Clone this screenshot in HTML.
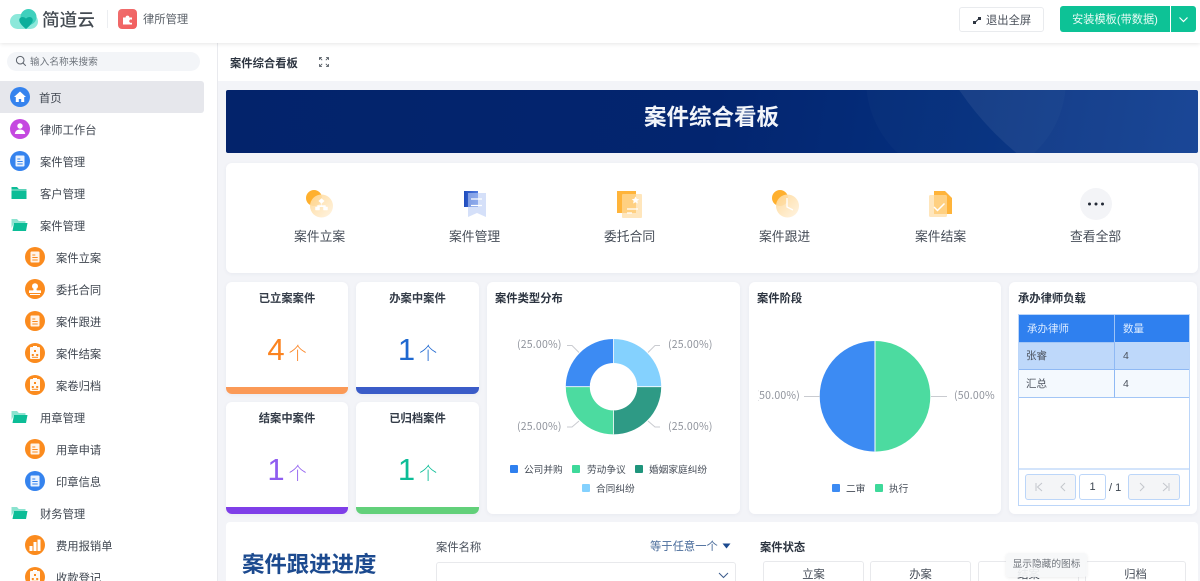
<!DOCTYPE html>
<html lang="zh"><head><meta charset="utf-8"><title>案件综合看板</title>
<style>
*{box-sizing:border-box;margin:0;padding:0}
html,body{width:1200px;height:581px;overflow:hidden;background:#f3f4f8}
body{position:relative;font-family:"Liberation Sans","Noto Sans CJK SC",sans-serif;color:#3c4550;filter:blur(.3px)}
.a{position:absolute;white-space:nowrap}
.card{position:absolute;background:#fff;border-radius:6px;box-shadow:0 1px 4px rgba(40,50,90,.05)}
.mi{position:absolute;font-size:11.3px;line-height:16px;color:#3f4650;white-space:nowrap;margin-top:2px}
.ic{position:absolute;width:20px;height:20px}
.ttl{position:absolute;font-size:11.3px;font-weight:700;color:#2c3440;line-height:16px;white-space:nowrap}
.sc{position:absolute;top:229px;font-size:12.8px;line-height:16px;color:#454c57;white-space:nowrap}
.stat{position:absolute;width:122px;height:112px;background:#fff;border-radius:6px;overflow:hidden;box-shadow:0 1px 4px rgba(40,50,90,.05)}
.stat b{position:absolute;left:0;right:0;top:9px;text-align:center;font-size:11.3px;line-height:16px;color:#343c48}
.stat i{position:absolute;left:0;right:0;bottom:0;height:7px}
.stat span{position:absolute;left:0;right:0;top:48px;text-align:center;font-style:normal;font-size:31px;line-height:40px;font-family:"Liberation Sans","Noto Sans CJK SC",sans-serif;font-weight:400}
.stat span em{font-style:normal;font-size:18px;margin-left:4px;font-family:"Noto Sans CJK SC",sans-serif;font-weight:300}
.lg{position:absolute;font-size:9.7px;line-height:12px;color:#454c57;white-space:nowrap;margin-top:1px}
.sq{position:absolute;width:8px;height:8px;border-radius:1px}
.lbl{position:absolute;font-family:"Noto Sans CJK SC","Liberation Sans",sans-serif;font-size:10.5px;line-height:14px;color:#8f939c;letter-spacing:.2px;white-space:nowrap;margin-top:1px}
.opt{position:absolute;top:561px;height:30px;background:#fff;border:1px solid #e8e9ec;border-radius:3px;text-align:center;font-size:11.3px;line-height:26px;color:#454c57}
.pg{position:absolute;top:474px;height:26px;background:#f4f5f7;border:1px solid #bcd6f9;text-align:center;color:#3c4550;font-size:11px;line-height:24px}
.pg svg{position:absolute;left:8px;top:7px}
</style></head><body>
<svg width="0" height="0" style="position:absolute"><defs>
<linearGradient id="gb" x1="0" y1="0" x2="1" y2="1"><stop offset="0" stop-color="#ffd793"/><stop offset="1" stop-color="#fff3e0"/></linearGradient>
<linearGradient id="gn" x1="0" y1="0" x2="1" y2="0"><stop offset="0" stop-color="#1f4cbd"/><stop offset="1" stop-color="#4f7be0"/></linearGradient>
<symbol id="doc" viewBox="0 0 20 20"><rect x="5.500" y="4.500" width="9" height="11" rx="1" fill="#fff" opacity=".9"/><path d="M7.300 8h3M7.300 10.500h5.400M7.300 13h5.400" stroke="currentColor" stroke-width="1"/></symbol>
<symbol id="stamp" viewBox="0 0 20 20"><circle cx="10" cy="7.300" r="3" fill="#fff"/><path d="M8.800 9h2.400l.6 2.400H16v2.600H4v-2.600h4.200z" fill="#fff"/><rect x="5" y="15" width="10" height="1" fill="#fff"/></symbol>
<symbol id="org" viewBox="0 0 20 20"><rect x="5" y="4" width="10" height="12" rx="1" fill="#fff" opacity=".95"/><rect x="8" y="3" width="4" height="2" fill="#fff"/><path d="M9 7h2v2H9zM6.800 11h2v2h-2zM11.200 11h2v2h-2z" fill="#fb8b1e"/><path d="M7 14.300h6" stroke="#fb8b1e"/></symbol>
<symbol id="folder" viewBox="0 0 20 20"><path d="M2.500 4h5.500l1.800 2H17.500v10h-15z" fill="#0cbd97"/><path d="M2.500 7h15" stroke="#d5f3ec" stroke-width=".8"/></symbol>
<symbol id="open" viewBox="0 0 20 20"><path d="M2.500 4h5.500l1.800 2H16.500v2H5L2.500 13z" fill="#8be3cf"/><path d="M5 8h13.500l-1.500 8H3.500z" fill="#0cbd97"/></symbol>
</defs></svg>

<!-- header -->
<div class="a" style="left:0;top:0;width:1200px;height:43px;background:#fff;box-shadow:0 1px 4px rgba(0,0,0,.1);z-index:3">
<svg class="a" style="left:10px;top:9px" width="28" height="20" viewBox="0 0 28 20"><rect x="0" y="5" width="28" height="15" rx="7.500" fill="#8ce8da"/><circle cx="18.500" cy="8" r="8" fill="#3fd0bd"/><path d="M16 20C10.500 15.500 8.500 12.500 9.500 9.800c1-2.300 4.300-2.500 6.500-.2 2.200-2.300 5.500-2.100 6.500.2 1 2.700-1 5.700-6.500 10.200z" fill="#0cae9b"/></svg>
<div class="a" style="left:42px;top:8px;font-size:17.600px;line-height:24px;font-weight:500;color:#444b52">简道云</div>
<div class="a" style="left:107px;top:10px;width:1px;height:18px;background:#eceef1"></div>
<div class="a" style="left:118px;top:9px;width:19px;height:20px;border-radius:4px;background:linear-gradient(135deg,#ef6f6f,#f25c5c)"></div>
<svg class="a" style="left:122px;top:14px" width="11" height="11" viewBox="0 0 11 11"><path d="M1 3.500h2.600a1.900 1.900 0 1 1 3.800 0H10v2.300a1.700 1.700 0 1 0 0 2.700V10.500H1z" fill="#fff"/></svg>
<div class="a" style="left:143px;top:12px;font-size:11.300px;line-height:16px;color:#5a6068">律所管理</div>
<div class="a" style="left:959px;top:7px;width:85px;height:25px;border:1px solid #e9ebee;border-radius:3px;background:#fff"></div>
<svg class="a" style="left:972px;top:16px" width="10" height="9" viewBox="0 0 10 9"><path d="M2 7.500L8 1.500" stroke="#2d3440" stroke-width="1"/><rect x="1" y="5" width="3" height="3" fill="#2d3440"/><rect x="6" y="1" width="3" height="3" fill="#2d3440"/></svg>
<div class="a" style="left:986px;top:13px;font-size:11.300px;line-height:16px;color:#4b515b">退出全屏</div>
<div class="a" style="left:1060px;top:6px;width:110px;height:26px;background:#0dc296;border-radius:3px 0 0 3px;color:#e9fbf5;font-size:11.200px;line-height:28px;text-align:center">安装模板(带数据)</div>
<div class="a" style="left:1171px;top:6px;width:25px;height:26px;background:#0dc296;border-radius:0 3px 3px 0"></div>
<svg class="a" style="left:1178px;top:16px" width="11" height="7" viewBox="0 0 11 7"><path d="M1.500 1.500l4 4 4-4" fill="none" stroke="#fff" stroke-width="1.200"/></svg>
</div>

<!-- sidebar -->
<div class="a" style="left:0;top:43px;width:218px;height:538px;background:#fff;border-right:1px solid #e9eaee"></div>
<div class="a" style="left:7px;top:52px;width:193px;height:19px;background:#f3f5f8;border-radius:10px"></div>
<svg class="a" style="left:15px;top:55px" width="12" height="12" viewBox="0 0 12 12"><circle cx="5.200" cy="5.200" r="3.800" fill="none" stroke="#5c626b" stroke-width="1"/><path d="M8 8l2.800 2.800" stroke="#5c626b" stroke-width="1"/></svg>
<div class="a" style="left:30px;top:56px;font-size:9.700px;line-height:14px;color:#6f757d">输入名称来搜索</div>
<div class="a" style="left:0;top:81px;width:204px;height:32px;background:#e6e7ec;border-radius:0 3px 3px 0"></div>

<svg class="ic" style="left:10px;top:87px" viewBox="0 0 20 20"><circle cx="10" cy="10" r="10" fill="#3583ee"/><path d="M10 4.500L16 10h-1.800v5h-3v-3H8.800v3h-3v-5H4z" fill="#fff"/></svg>
<div class="mi" style="left:39px;top:88.500px">首页</div>
<svg class="ic" style="left:10px;top:119px" viewBox="0 0 20 20"><circle cx="10" cy="10" r="10" fill="#c548e0"/><circle cx="10" cy="7" r="2.700" fill="#fff"/><path d="M4.800 15c.4-3 2.300-4.500 5.200-4.500s4.800 1.500 5.200 4.500z" fill="#fff"/></svg>
<div class="mi" style="left:40px;top:121px">律师工作台</div>
<svg class="ic" style="left:10px;top:151px;color:#3583ee" viewBox="0 0 20 20"><circle cx="10" cy="10" r="10" fill="#3583ee"/><use href="#doc"/></svg>
<div class="mi" style="left:40px;top:153px">案件管理</div>
<svg class="ic" style="left:9px;top:183px" viewBox="0 0 20 20"><use href="#folder"/></svg>
<div class="mi" style="left:40px;top:185px">客户管理</div>
<svg class="ic" style="left:9px;top:215px" viewBox="0 0 20 20"><use href="#open"/></svg>
<div class="mi" style="left:40px;top:217px">案件管理</div>

<svg class="ic" style="left:25px;top:247px;color:#fb8b1e" viewBox="0 0 20 20"><circle cx="10" cy="10" r="10" fill="#fb8b1e"/><use href="#doc"/></svg>
<div class="mi" style="left:56px;top:249px">案件立案</div>
<svg class="ic" style="left:25px;top:279px" viewBox="0 0 20 20"><circle cx="10" cy="10" r="10" fill="#fb8b1e"/><use href="#stamp"/></svg>
<div class="mi" style="left:56px;top:281px">委托合同</div>
<svg class="ic" style="left:25px;top:311px;color:#fb8b1e" viewBox="0 0 20 20"><circle cx="10" cy="10" r="10" fill="#fb8b1e"/><use href="#doc"/></svg>
<div class="mi" style="left:56px;top:313px">案件跟进</div>
<svg class="ic" style="left:25px;top:343px" viewBox="0 0 20 20"><circle cx="10" cy="10" r="10" fill="#fb8b1e"/><use href="#org"/></svg>
<div class="mi" style="left:56px;top:345px">案件结案</div>
<svg class="ic" style="left:25px;top:375px" viewBox="0 0 20 20"><circle cx="10" cy="10" r="10" fill="#fb8b1e"/><use href="#org"/></svg>
<div class="mi" style="left:56px;top:377px">案卷归档</div>
<svg class="ic" style="left:9px;top:407px" viewBox="0 0 20 20"><use href="#open"/></svg>
<div class="mi" style="left:40px;top:409px">用章管理</div>
<svg class="ic" style="left:25px;top:439px;color:#fb8b1e" viewBox="0 0 20 20"><circle cx="10" cy="10" r="10" fill="#fb8b1e"/><use href="#doc"/></svg>
<div class="mi" style="left:56px;top:441px">用章申请</div>
<svg class="ic" style="left:25px;top:471px;color:#3583ee" viewBox="0 0 20 20"><circle cx="10" cy="10" r="10" fill="#3583ee"/><use href="#doc"/></svg>
<div class="mi" style="left:56px;top:473px">印章信息</div>
<svg class="ic" style="left:9px;top:503px" viewBox="0 0 20 20"><use href="#open"/></svg>
<div class="mi" style="left:40px;top:505px">财务管理</div>
<svg class="ic" style="left:25px;top:535px" viewBox="0 0 20 20"><circle cx="10" cy="10" r="10" fill="#fb8b1e"/><path d="M4.500 11h3v5h-3zM8.500 7h3v9h-3zM12.500 4.500h3V16h-3z" fill="#fff"/></svg>
<div class="mi" style="left:56px;top:537px">费用报销单</div>
<svg class="ic" style="left:25px;top:567px" viewBox="0 0 20 20"><circle cx="10" cy="10" r="10" fill="#fb8b1e"/><use href="#org"/></svg>
<div class="mi" style="left:56px;top:569px">收款登记</div>

<!-- tab row -->
<div class="a" style="left:218px;top:43px;width:982px;height:38px;background:#fff"></div>
<div class="a" style="left:230px;top:55px;font-size:11.300px;line-height:16px;font-weight:700;color:#2c3440;margin-top:1px">案件综合看板</div>
<svg class="a" style="left:319px;top:57px" width="10" height="10" viewBox="0 0 10 10"><path d="M.5 3V.5H3M7 .5h2.500V3M9.500 7v2.500H7M3 9.500H.5V7M.8.8l2.400 2.400M9.200.8L6.800 3.200M9.200 9.200L6.800 6.800M.8 9.200l2.400-2.400" fill="none" stroke="#4e555e" stroke-width=".8"/></svg>

<!-- banner -->
<div class="a" style="left:226px;top:90px;width:972px;height:63px;border-radius:2px;overflow:hidden;background:linear-gradient(100deg,#03236b 0%,#03256f 50%,#05307f 78%,#0a3a90 100%)">
<div class="a" style="left:640px;top:-110px;width:200px;height:200px;border-radius:50%;background:rgba(255,255,255,.018)"></div>
<div class="a" style="left:681px;top:-473px;width:606px;height:606px;border-radius:50%;background:rgba(255,255,255,.065)"></div>
<div class="a" style="left:418px;top:12px;font-size:22.500px;line-height:32px;font-weight:700;color:#f2f5fa">案件综合看板</div>
</div>

<!-- shortcuts -->
<div class="card" style="left:226px;top:163px;width:972px;height:110px"></div>
<svg class="a" style="left:305px;top:189px" width="30" height="30" viewBox="0 0 30 30"><circle cx="9" cy="9" r="8" fill="#ffb02e"/><circle cx="16.500" cy="17" r="11.500" fill="url(#gb)" opacity=".9"/><path d="M16.500 9.500l2.800 2.500-2.800 2.500-2.800-2.500zM10.500 18h4v3h-4zM18.500 18h4v3h-4zM16.500 14v2.500M12.500 18v-1.500h8V18" fill="#fff" stroke="#fff" stroke-width=".5"/></svg>
<div class="sc" style="left:294px">案件立案</div>
<svg class="a" style="left:463px;top:190px" width="24" height="28" viewBox="0 0 24 28"><path d="M1 1h14v16H1z" fill="url(#gn)"/><path d="M5 3h18v24l-9-4-9 4z" fill="#b9cbf5" opacity=".6"/><path d="M8 9h11M8 15.500h11" stroke="#fff" stroke-width="1.300"/></svg>
<div class="sc" style="left:449px">案件管理</div>
<svg class="a" style="left:617px;top:191px" width="26" height="28" viewBox="0 0 26 28"><rect x="0" y="0" width="19" height="22" fill="#ffb43a"/><rect x="5" y="3" width="20" height="24" rx="1" fill="#ffdca0" opacity=".7"/><path d="M18.500 5.500l1.200 2.400 2.600.3-2 1.700.6 2.600-2.400-1.300-2.400 1.300.6-2.600-2-1.700 2.600-.3z" fill="#fff"/><path d="M10 18h11M10 22h5" stroke="#fff" stroke-width="1.200"/></svg>
<div class="sc" style="left:604px">委托合同</div>
<svg class="a" style="left:771px;top:189px" width="30" height="30" viewBox="0 0 30 30"><circle cx="9" cy="9" r="8" fill="#ffb02e"/><circle cx="16.500" cy="17" r="11.500" fill="url(#gb)" opacity=".9"/><path d="M16 9v9l6 3" fill="none" stroke="#fff" stroke-width="1.300"/></svg>
<div class="sc" style="left:759px">案件跟进</div>
<svg class="a" style="left:928px;top:190px" width="26" height="28" viewBox="0 0 26 28"><path d="M6 1h11l7 7v16H6z" fill="#ffb43a"/><rect x="1" y="5" width="18" height="22" rx="1.500" fill="#ffdca0" opacity=".7"/><path d="M6 17l3.500 3.500 7-7" fill="none" stroke="#fff" stroke-width="1.500"/></svg>
<div class="sc" style="left:915px">案件结案</div>
<div class="a" style="left:1080px;top:188px;width:32px;height:32px;border-radius:50%;background:#f3f4f7"></div>
<svg class="a" style="left:1087px;top:201px" width="18" height="6" viewBox="0 0 18 6"><circle cx="2.500" cy="3" r="1.500" fill="#232a36"/><circle cx="9" cy="3" r="1.500" fill="#232a36"/><circle cx="15.500" cy="3" r="1.500" fill="#232a36"/></svg>
<div class="sc" style="left:1070px">查看全部</div>

<!-- stat cards -->
<div class="stat" style="left:226px;top:282px"><b>已立案案件</b><span style="color:#fb8320">4<em>个</em></span><i style="background:#fb9a57"></i></div>
<div class="stat" style="left:356px;top:282px;width:123px"><b>办案中案件</b><span style="color:#1f68d0">1<em>个</em></span><i style="background:#3b5cc8"></i></div>
<div class="stat" style="left:226px;top:402px"><b>结案中案件</b><span style="color:#8f5df0">1<em>个</em></span><i style="background:#7f3fe8"></i></div>
<div class="stat" style="left:356px;top:402px;width:123px"><b>已归档案件</b><span style="color:#0cbd97">1<em>个</em></span><i style="background:#62d07a"></i></div>

<!-- donut -->
<div class="card" style="left:487px;top:282px;width:253px;height:232px"></div>
<div class="ttl" style="left:495px;top:291px">案件类型分布</div>
<svg class="a" style="left:487px;top:282px" width="253" height="232" viewBox="487 282 253 232">
<path d="M613.500 339a47.700 47.700 0 0 1 47.700 47.700h-24a23.700 23.700 0 0 0-23.700-23.700z" fill="#84d1fe"/>
<path d="M661.200 386.700a47.700 47.700 0 0 1-47.700 47.700v-24a23.700 23.700 0 0 0 23.700-23.700z" fill="#2e9a85"/>
<path d="M613.500 434.400a47.700 47.700 0 0 1-47.700-47.700h24a23.700 23.700 0 0 0 23.700 23.700z" fill="#4cdba0"/>
<path d="M565.800 386.700a47.700 47.700 0 0 1 47.700-47.700v24a23.700 23.700 0 0 0-23.700 23.700z" fill="#3c8bf3"/>
<path d="M613.500 339v24M613.500 410.400v24M565.800 386.700h24M637.200 386.700h24" stroke="#fff" stroke-width=".8"/>
<path d="M567 345.500h5l7 7M660 345.500h-5l-7 7M567 427h5l7-6M660 427h-5l-7-6" fill="none" stroke="#c9cbd0" stroke-width="1"/>
</svg>
<div class="lbl" style="left:517px;top:337px">(25.00%)</div>
<div class="lbl" style="left:668px;top:337px">(25.00%)</div>
<div class="lbl" style="left:517px;top:419px">(25.00%)</div>
<div class="lbl" style="left:668px;top:419px">(25.00%)</div>
<div class="sq" style="left:510px;top:465px;background:#2f80ef"></div><div class="lg" style="left:524px;top:464px">公司并购</div>
<div class="sq" style="left:572px;top:465px;background:#3ed99a"></div><div class="lg" style="left:587px;top:464px">劳动争议</div>
<div class="sq" style="left:635px;top:465px;background:#1f957c"></div><div class="lg" style="left:649px;top:464px">婚姻家庭纠纷</div>
<div class="sq" style="left:582px;top:484px;background:#84d1fe"></div><div class="lg" style="left:596px;top:483px">合同纠纷</div>

<!-- pie -->
<div class="card" style="left:749px;top:282px;width:252px;height:232px"></div>
<div class="ttl" style="left:757px;top:291px">案件阶段</div>
<svg class="a" style="left:749px;top:282px" width="252" height="232" viewBox="749 282 252 232">
<path d="M875 341a55.300 55.300 0 0 0 0 110.600z" fill="#3c8bf3"/>
<path d="M875 341a55.300 55.300 0 0 1 0 110.600z" fill="#4cdba0"/>
<path d="M875 341v110.600" stroke="#fff" stroke-width="1"/>
<path d="M804 396.500h16M931 396.500h16" stroke="#c9cbd0" stroke-width="1"/>
</svg>
<div class="a" style="left:758px;top:388px;width:42px;height:16px;line-height:14px;overflow:hidden;direction:rtl"><span class="lbl" style="position:static;direction:ltr;unicode-bidi:embed;display:inline-block">(50.00%)</span></div>
<div class="a" style="left:954px;top:388px;width:41px;height:16px;line-height:14px;overflow:hidden"><span class="lbl" style="position:static;display:inline-block">(50.00%)</span></div>
<div class="sq" style="left:832px;top:484px;background:#3c8bf3"></div><div class="lg" style="left:846px;top:483px">二审</div>
<div class="sq" style="left:875px;top:484px;background:#3ed99a"></div><div class="lg" style="left:889px;top:483px">执行</div>

<!-- table -->
<div class="card" style="left:1009px;top:282px;width:188px;height:232px"></div>
<div class="ttl" style="left:1018px;top:291px">承办律师负载</div>
<div class="a" style="left:1018px;top:314px;width:172px;height:192px;border:1px solid #bcd6f9;background:#fff"></div>
<div class="a" style="left:1019px;top:315px;width:96px;height:27px;background:#2f80ef;color:#dcebff;font-size:10.500px;line-height:29px;padding-left:8px;border-right:1px solid #9cc3f7">承办律师</div>
<div class="a" style="left:1115px;top:315px;width:74px;height:27px;background:#2f80ef;color:#dcebff;font-size:10.500px;line-height:29px;padding-left:8px">数量</div>
<div class="a" style="left:1019px;top:342px;width:96px;height:28px;background:#bed8fa;border-top:1px solid #a3c6f6;border-bottom:1px solid #8fb9f4;border-right:1px solid #8fb9f4;font-size:10.500px;line-height:27px;padding-left:7px;color:#4a515c">张睿</div>
<div class="a" style="left:1115px;top:342px;width:74px;height:28px;background:#bed8fa;border-bottom:1px solid #8fb9f4;font-size:10.500px;line-height:28px;padding-left:8px;color:#4a515c">4</div>
<div class="a" style="left:1019px;top:370px;width:96px;height:28px;background:#f4f9fe;border-bottom:1px solid #a3c6f6;border-right:1px solid #8fb9f4;font-size:10.500px;line-height:28px;padding-left:7px;color:#4a515c">汇总</div>
<div class="a" style="left:1115px;top:370px;width:74px;height:28px;background:#f4f9fe;border-bottom:1px solid #a3c6f6;font-size:10.500px;line-height:28px;padding-left:8px;color:#4a515c">4</div>
<div class="a" style="left:1019px;top:468px;width:170px;height:2px;background:#d3e4fb"></div>
<div class="pg" style="left:1025px;width:26px;border-radius:3px 0 0 3px"><svg width="10" height="10" viewBox="0 0 10 10"><path d="M2 1v8M8 1L3.500 5 8 9" fill="none" stroke="#c3c6cc" stroke-width="1"/></svg></div>
<div class="pg" style="left:1050px;width:26px;border-left:0;border-radius:0 3px 3px 0"><svg width="10" height="10" viewBox="0 0 10 10"><path d="M7 1L3 5l4 4" fill="none" stroke="#c3c6cc" stroke-width="1"/></svg></div>
<div class="pg" style="left:1079px;width:27px;background:#fff;border-radius:3px">1</div>
<div class="a" style="left:1109px;top:481px;font-size:11px;line-height:14px;color:#3c4550">/ 1</div>
<div class="pg" style="left:1128px;width:26px;border-radius:3px 0 0 3px"><svg width="10" height="10" viewBox="0 0 10 10"><path d="M3 1l4 4-4 4" fill="none" stroke="#c3c6cc" stroke-width="1"/></svg></div>
<div class="pg" style="left:1153px;width:27px;border-left:0;border-radius:0 3px 3px 0"><svg width="10" height="10" viewBox="0 0 10 10"><path d="M8 1v8M2 1l4.500 4L2 9" fill="none" stroke="#c3c6cc" stroke-width="1"/></svg></div>

<!-- bottom card -->
<div class="a" style="left:226px;top:522px;width:972px;height:70px;background:#fff;border-radius:4px 4px 0 0"></div>
<div class="a" style="left:242px;top:549px;font-size:22.400px;line-height:32px;font-weight:700;color:#1c4a8f">案件跟进进度</div>
<div class="a" style="left:436px;top:540px;font-size:11.300px;line-height:16px;color:#4a515c">案件名称</div>
<div class="a" style="left:650px;top:539px;font-size:11.300px;line-height:16px;color:#4a6c9b">等于任意一个</div>
<svg class="a" style="left:722px;top:543px" width="9" height="6" viewBox="0 0 9 6"><path d="M.5.500h8L4.500 5.500z" fill="#1c4a8f"/></svg>
<div class="a" style="left:436px;top:562px;width:300px;height:30px;border:1px solid #e8e9ec;border-radius:3px;background:#fff"></div>
<svg class="a" style="left:718px;top:572px" width="11" height="7" viewBox="0 0 11 7"><path d="M1 1l4.500 4.500L10 1" fill="none" stroke="#3c5c8c" stroke-width="1"/></svg>
<div class="a" style="left:760px;top:540px;font-size:11.300px;line-height:16px;font-weight:700;color:#2c3440">案件状态</div>
<div class="opt" style="left:763px;width:101px">立案</div>
<div class="opt" style="left:870px;width:101px">办案</div>
<div class="opt" style="left:978px;width:101px">结案</div>
<div class="opt" style="left:1085px;width:101px">归档</div>
<div class="a" style="left:1006px;top:553px;width:81px;height:24px;background:rgba(246,247,248,.92);border-radius:3px;box-shadow:0 1px 3px rgba(0,0,0,.08);font-size:9.700px;line-height:24px;text-align:center;color:#70757c">显示隐藏的图标</div>
</body></html>
